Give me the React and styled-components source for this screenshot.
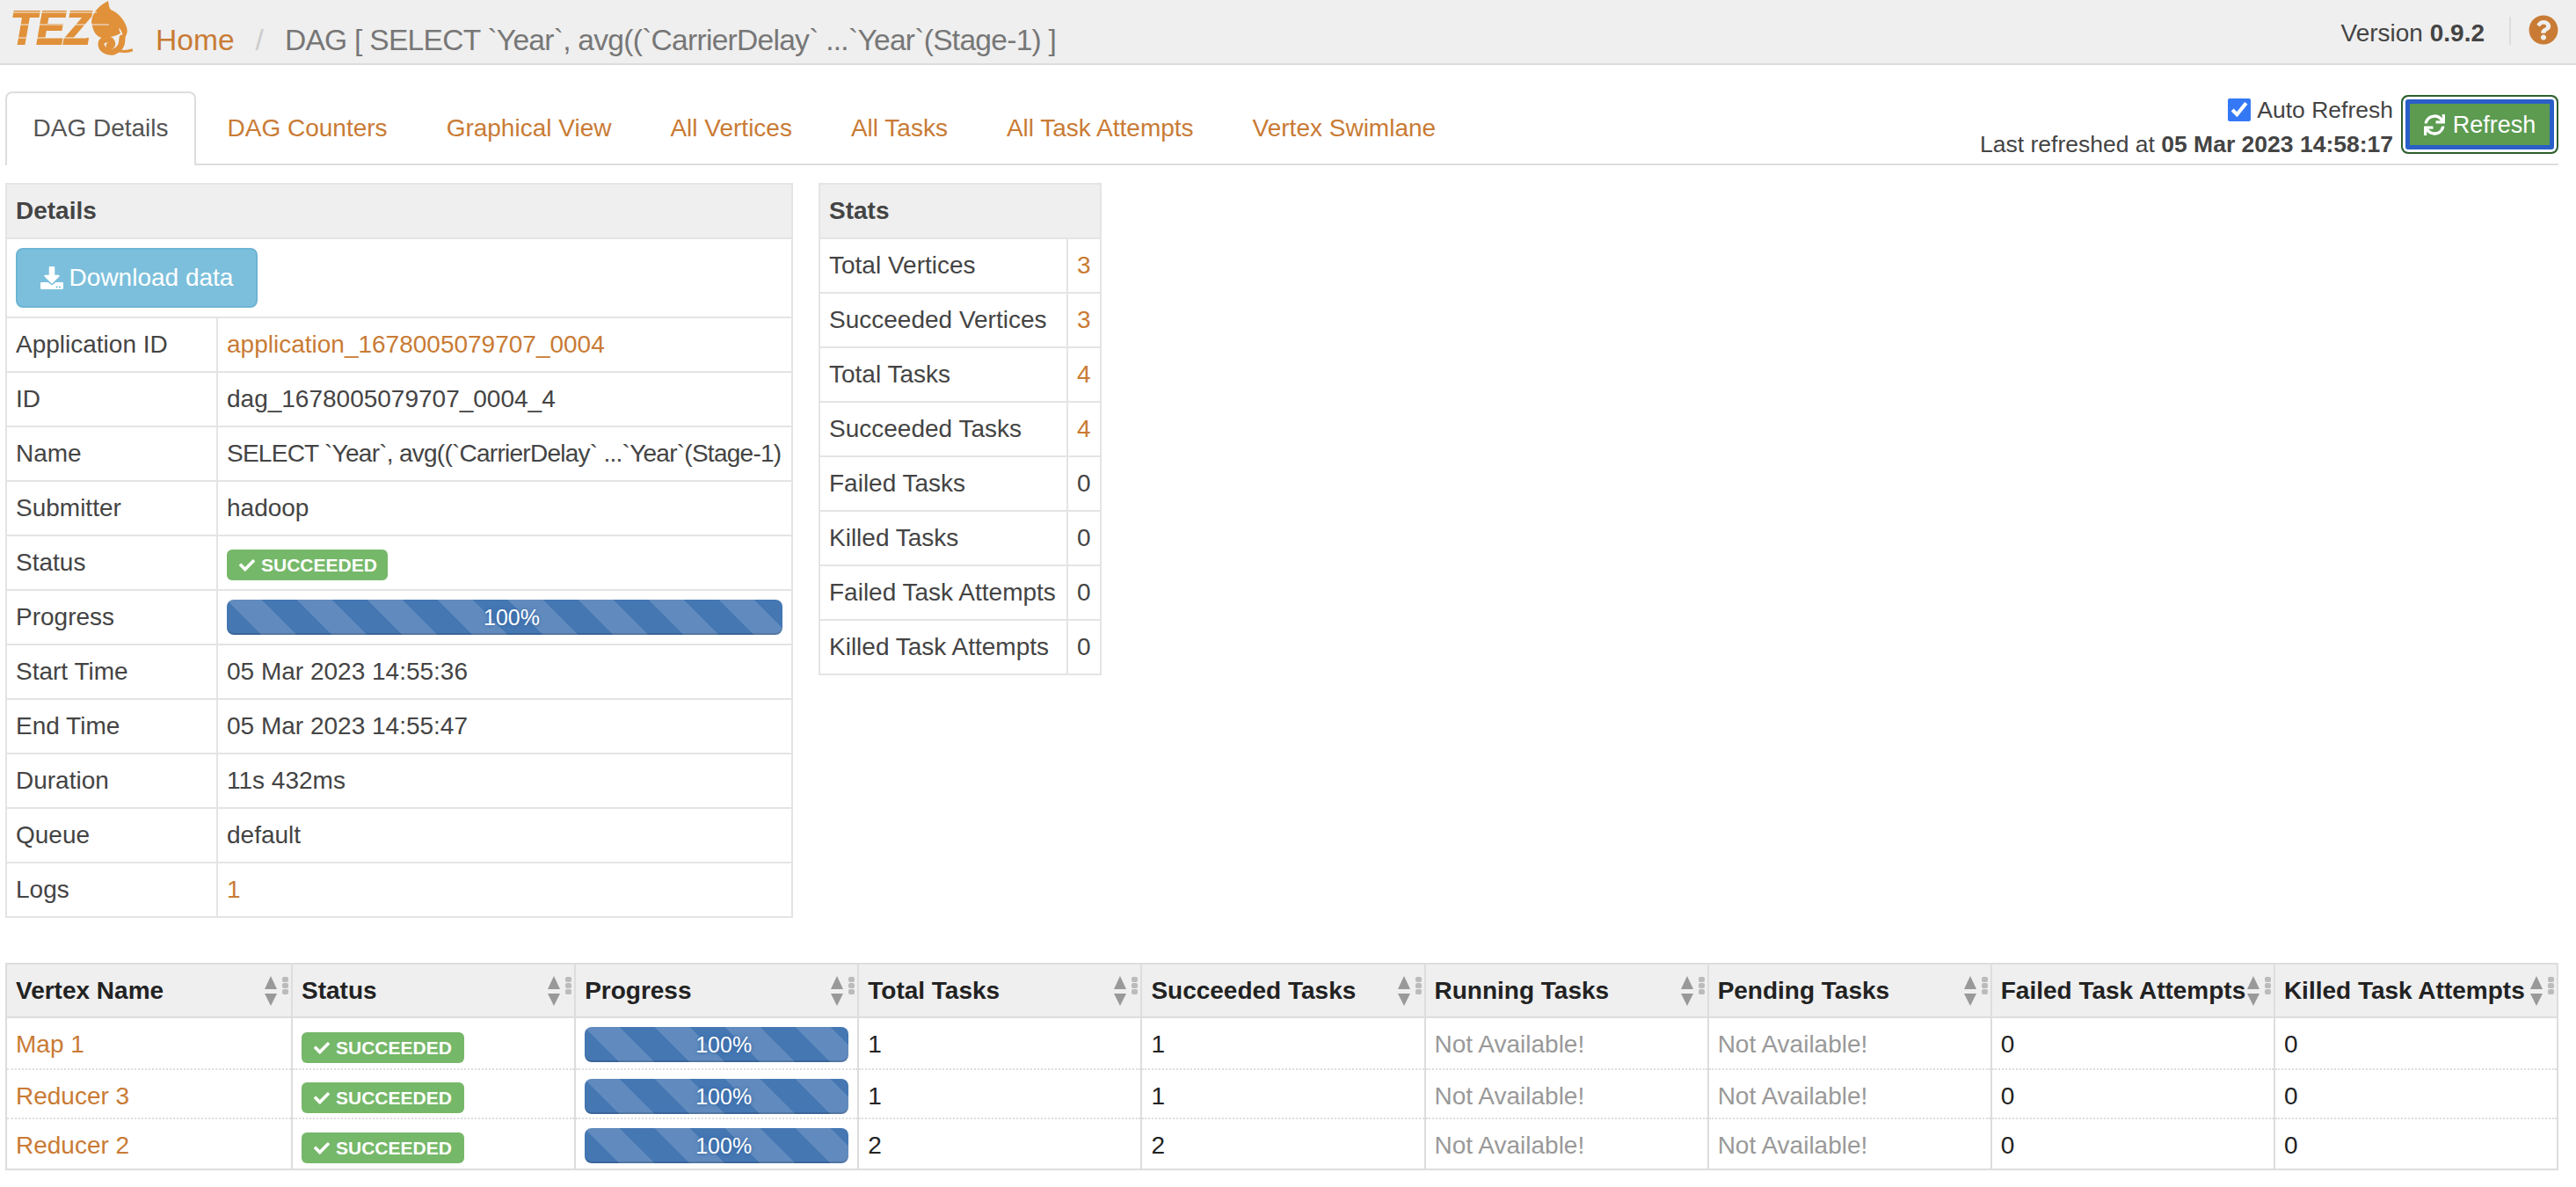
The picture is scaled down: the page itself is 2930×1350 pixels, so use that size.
import React from 'react';
import styled, { createGlobalStyle } from 'styled-components';
import { FaCheck, FaDownload, FaQuestionCircle, FaSync } from 'react-icons/fa';

const orange = '#c97b35';
const line = '#e4e4e4';

const GlobalStyle = createGlobalStyle`
  html, body { margin: 0; padding: 0; background: #fff; }
  body {
    font-family: "Liberation Sans", Arial, sans-serif;
    font-size: 28px;
    line-height: 40px;
    color: #444;
  }
  * { box-sizing: border-box; }
`;

const Link = styled.a`
  color: ${orange};
  text-decoration: none;
`;

const Header = styled.header`
  display: flex;
  align-items: center;
  height: 74px;
  padding: 0 20px 0 6px;
  background: #efefef;
  border-bottom: 2px solid #dcdcdc;
`;

const LogoMark = styled.svg`
  flex: none;
  width: 145px;
  height: 63px;
  align-self: flex-start;
`;

const Crumbs = styled.div`
  display: flex;
  align-items: center;
  flex: 1;
  margin: 20px 0 0 26px;
  font-size: 33.6px;
  color: #777;
`;

const Slash = styled.span`
  margin: 0 24px;
  color: #ccc;
`;

const QueryTitle = styled.span`
  letter-spacing: -0.74px;
`;

const Version = styled.div`
  margin-top: 3px;
  color: #444;
  b { font-weight: 700; }
`;

const HeaderRule = styled.span`
  width: 2px;
  height: 32px;
  margin: -3px 20px 0 28px;
  background: #ddd;
`;

const HelpIcon = styled(FaQuestionCircle)`
  width: 34px;
  height: 34px;
  margin-top: -4px;
  color: ${orange};
`;

const Page = styled.main`
  padding: 30px 20px 0 6px;
`;

const TabBar = styled.nav`
  display: flex;
  justify-content: space-between;
  height: 84px;
  border-bottom: 2px solid #ddd;
`;

const Tabs = styled.div`
  display: flex;
  align-items: flex-start;
  gap: 4px;
`;

const Tab = styled.a`
  height: ${p => (p.$active ? 84 : 82)}px;
  padding: 20px 29.5px 0;
  color: ${p => (p.$active ? '#555' : orange)};
  background: ${p => (p.$active ? '#fff' : 'transparent')};
  text-decoration: none;
  border: 2px solid ${p => (p.$active ? '#ddd' : 'transparent')};
  border-bottom: 0;
  border-radius: 8px 8px 0 0;
`;

const RefreshArea = styled.div`
  display: flex;
  gap: 9px;
  padding-top: 4px;
`;

const RefreshInfo = styled.div`
  display: flex;
  flex-direction: column;
  align-items: flex-end;
  font-size: 26.5px;
  line-height: 38px;
  b { font-weight: 700; }
`;

const AutoLabel = styled.label`
  display: flex;
  align-items: center;
  gap: 7px;
  margin-top: -2px;
  margin-bottom: 1px;
`;

const AutoCheck = styled.input`
  width: 26px;
  height: 26px;
  margin: 0;
  accent-color: #3478f6;
`;

const RefreshButton = styled.button`
  display: flex;
  align-items: center;
  justify-content: center;
  gap: 9px;
  width: 179px;
  height: 67px;
  padding: 0;
  font: inherit;
  font-size: 27px;
  color: #fff;
  background: #5c9b50;
  border: 2px solid #2f5f2d;
  border-radius: 8px;
  box-shadow: inset 0 0 0 3px #fff, inset 0 0 0 8px #2a5fc8;
  svg { width: 24px; height: 24px; }
`;

const Panels = styled.section`
  display: flex;
  align-items: flex-start;
  gap: 29px;
  margin-top: 20px;
`;

const InfoTable = styled.table`
  width: ${p => p.$width}px;
  table-layout: ${p => (p.$fixed ? 'fixed' : 'auto')};
  border-collapse: collapse;

  th, td {
    padding: 10px;
    border: 2px solid ${line};
    text-align: left;
    font-weight: 400;
    white-space: nowrap;
  }
  th {
    font-weight: 700;
    background: #efefef;
  }
`;

const LabelColumn = styled.col`
  width: 240px;
`;

const DownloadButton = styled.button`
  display: flex;
  align-items: center;
  justify-content: center;
  gap: 7px;
  width: 275px;
  height: 68px;
  padding: 0;
  font: inherit;
  color: #fff;
  background: #7cbfdc;
  border: 2px solid #6db4d3;
  border-radius: 8px;
  svg { width: 26px; height: 26px; }
`;

const Badge = styled.span`
  display: flex;
  align-items: center;
  gap: 7px;
  width: ${p => p.$width}px;
  height: 35px;
  margin-top: ${p => p.$top}px;
  padding-left: 14px;
  font-size: 21px;
  line-height: 35px;
  font-weight: 700;
  color: #fff;
  background: #76b869;
  border-radius: 6px;
  svg { width: 18px; height: 18px; }
`;

const Bar = styled.div`
  height: 40px;
  padding-left: 16px;
  font-size: 25px;
  line-height: 40px;
  text-align: center;
  color: #fff;
  text-shadow: 0 0 4px #2c5f9e;
  border-radius: 8px;
  background-color: #4577b3;
  background-image: linear-gradient(
    45deg,
    rgba(255, 255, 255, 0.15) 25%,
    transparent 25%,
    transparent 50%,
    rgba(255, 255, 255, 0.15) 50%,
    rgba(255, 255, 255, 0.15) 75%,
    transparent 75%,
    transparent
  );
  background-size: 80px 80px;
  box-shadow: inset 0 -2px 0 rgba(0, 0, 0, 0.15);
`;

const VertexTable = styled.table`
  width: 2904px;
  margin-top: 51px;
  table-layout: fixed;
  border-collapse: collapse;
  color: #222;
  border: 2px solid #ddd;
`;

const NameColumn = styled.col`
  width: 325px;
`;

const HeadCell = styled.th`
  height: 61px;
  padding: 0 3px 0 10px;
  text-align: left;
  font-weight: 700;
  background: #efefef;
  border: 2px solid #ddd;
`;

const HeadInner = styled.div`
  display: flex;
  align-items: center;
`;

const HeadLabel = styled.span`
  flex: 1;
  white-space: nowrap;
`;

const SortMark = styled.svg`
  flex: none;
  width: 14px;
  height: 34px;
  margin-right: 6px;
`;

const Grip = styled.span`
  flex: none;
  display: flex;
  flex-direction: column;
  gap: 1px;
  width: 7px;
  margin-bottom: 11px;
  i {
    height: 6px;
    background: #bbb;
    border-radius: 2px;
  }
`;

const VertexRow = styled.tr`
  height: ${p => p.$height}px;
`;

const VertexCell = styled.td`
  padding: 10px 10px 0;
  vertical-align: top;
  white-space: nowrap;
  border-left: 2px solid #ddd;
  border-right: 2px solid #ddd;
  border-bottom: 2px dotted #ddd;
`;

const Missing = styled.span`
  color: #999;
`;

const details = [
  ['ID', 'dag_1678005079707_0004_4'],
  ['Submitter', 'hadoop'],
];

const times = [
  ['Start Time', '05 Mar 2023 14:55:36'],
  ['End Time', '05 Mar 2023 14:55:47'],
  ['Duration', '11s 432ms'],
  ['Queue', 'default'],
];

const stats = [
  ['Total Vertices', 3, true],
  ['Succeeded Vertices', 3, true],
  ['Total Tasks', 4, true],
  ['Succeeded Tasks', 4, true],
  ['Failed Tasks', 0],
  ['Killed Tasks', 0],
  ['Failed Task Attempts', 0],
  ['Killed Task Attempts', 0],
];

const columns = [
  'Vertex Name', 'Status', 'Progress', 'Total Tasks', 'Succeeded Tasks',
  'Running Tasks', 'Pending Tasks', 'Failed Task Attempts', 'Killed Task Attempts',
];

const vertices = [
  { name: 'Map 1', tasks: 1, height: 59, top: 6 },
  { name: 'Reducer 3', tasks: 1, height: 56, top: 4 },
  { name: 'Reducer 2', tasks: 2, height: 58, top: 5 },
];

const tabs = ['DAG Details', 'DAG Counters', 'Graphical View', 'All Vertices', 'All Tasks', 'All Task Attempts', 'Vertex Swimlane'];

const Logo = () => (
  <LogoMark viewBox="0 0 145 63">
    <text
      x="6"
      y="50"
      fontFamily="Liberation Sans, Arial, sans-serif"
      fontWeight="700"
      fontStyle="italic"
      fontSize="54"
      textLength="91"
      lengthAdjust="spacingAndGlyphs"
      fill="#e0913a"
      stroke="#e0913a"
      strokeWidth="2"
    >
      TEZ
    </text>
    <path
      fill="#e0913a"
      d="M98 24C100 12 108 6 117 1C118 6 118 9 120 11C128 14 136 23 138 31C140 37 137 42 135 44C133 38 132 33 129 32L131 38C124 42 116 43 110 43C103 42 99 34 98 24Z"
    />
    <path
      fill="none"
      stroke="#e0913a"
      strokeWidth="7"
      strokeLinecap="round"
      d="M133 43C133 51 131 56 123 59C115 60 109 56 109 50C109 45 115 44 120 46C123 49 122 53 118 52"
    />
    <path fill="none" stroke="#e0913a" strokeWidth="3" strokeLinecap="round" d="M130 58C136 59 141 58 144 57" />
    <path stroke="#efefef" strokeWidth="1" d="M7 14H104M7 28H118M7 43H92" />
  </LogoMark>
);

const StatusBadge = ({ width, top }) => (
  <Badge $width={width} $top={top}>
    <FaCheck />
    SUCCEEDED
  </Badge>
);

const SortHandle = () => (
  <>
    <SortMark viewBox="0 0 14 34">
      <path fill="#999" d="M7 0L14 15H0Z" />
      <path fill="#999" d="M0 20H14L7 34Z" />
    </SortMark>
    <Grip><i /><i /><i /></Grip>
  </>
);

const App = () => (
  <>
    <GlobalStyle />
    <Header>
      <Logo />
      <Crumbs>
        <Link>Home</Link>
        <Slash>/</Slash>
        <QueryTitle>DAG [ SELECT `Year`, avg((`CarrierDelay` ...`Year`(Stage-1) ]</QueryTitle>
      </Crumbs>
      <Version>Version <b>0.9.2</b></Version>
      <HeaderRule />
      <HelpIcon />
    </Header>

    <Page>
      <TabBar>
        <Tabs>
          {tabs.map((tab, i) => <Tab key={tab} $active={i === 0}>{tab}</Tab>)}
        </Tabs>
        <RefreshArea>
          <RefreshInfo>
            <AutoLabel>
              <AutoCheck type="checkbox" defaultChecked />
              Auto Refresh
            </AutoLabel>
            <span>Last refreshed at <b>05 Mar 2023 14:58:17</b></span>
          </RefreshInfo>
          <RefreshButton><FaSync />Refresh</RefreshButton>
        </RefreshArea>
      </TabBar>

      <Panels>
        <InfoTable $width={896} $fixed>
          <colgroup>
            <LabelColumn />
            <col />
          </colgroup>
          <thead>
            <tr><th colSpan={2}>Details</th></tr>
          </thead>
          <tbody>
            <tr>
              <td colSpan={2}>
                <DownloadButton><FaDownload />Download data</DownloadButton>
              </td>
            </tr>
            <tr>
              <td>Application ID</td>
              <td><Link>application_1678005079707_0004</Link></td>
            </tr>
            <tr><td>{details[0][0]}</td><td>{details[0][1]}</td></tr>
            <tr><td>Name</td><td><QueryTitle>SELECT `Year`, avg((`CarrierDelay` ...`Year`(Stage-1)</QueryTitle></td></tr>
            <tr><td>{details[1][0]}</td><td>{details[1][1]}</td></tr>
            <tr><td>Status</td><td><StatusBadge width={183} top={5} /></td></tr>
            <tr><td>Progress</td><td><Bar>100%</Bar></td></tr>
            {times.map(([label, value]) => (
              <tr key={label}><td>{label}</td><td>{value}</td></tr>
            ))}
            <tr><td>Logs</td><td><Link>1</Link></td></tr>
          </tbody>
        </InfoTable>

        <InfoTable $width={322}>
          <thead>
            <tr><th colSpan={2}>Stats</th></tr>
          </thead>
          <tbody>
            {stats.map(([label, value, linked]) => (
              <tr key={label}>
                <td>{label}</td>
                <td>{linked ? <Link>{value}</Link> : value}</td>
              </tr>
            ))}
          </tbody>
        </InfoTable>
      </Panels>

      <VertexTable>
        <colgroup>
          <NameColumn />
        </colgroup>
        <thead>
          <tr>
            {columns.map(col => (
              <HeadCell key={col}>
                <HeadInner>
                  <HeadLabel>{col}</HeadLabel>
                  <SortHandle />
                </HeadInner>
              </HeadCell>
            ))}
          </tr>
        </thead>
        <tbody>
          {vertices.map(v => (
            <VertexRow key={v.name} $height={v.height}>
              <VertexCell><Link>{v.name}</Link></VertexCell>
              <VertexCell><StatusBadge width={185} top={v.top} /></VertexCell>
              <VertexCell><Bar>100%</Bar></VertexCell>
              <VertexCell>{v.tasks}</VertexCell>
              <VertexCell>{v.tasks}</VertexCell>
              <VertexCell><Missing>Not Available!</Missing></VertexCell>
              <VertexCell><Missing>Not Available!</Missing></VertexCell>
              <VertexCell>0</VertexCell>
              <VertexCell>0</VertexCell>
            </VertexRow>
          ))}
        </tbody>
      </VertexTable>
    </Page>
  </>
);

export default App;
